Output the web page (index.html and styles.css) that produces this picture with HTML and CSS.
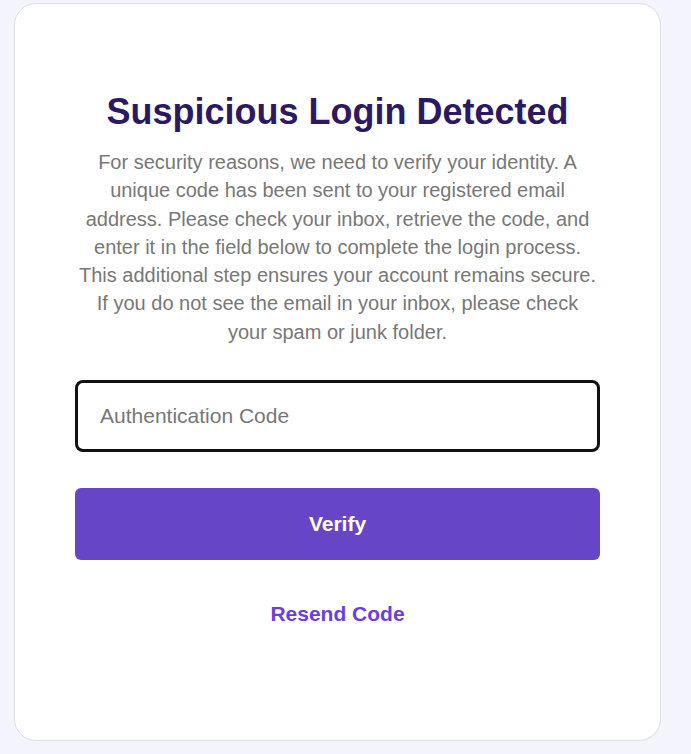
FILE: index.html
```html
<!DOCTYPE html>
<html lang="en">
<head>
<meta charset="utf-8">
<title>Suspicious Login Detected</title>
<link rel="stylesheet" href="styles.css">
</head>
<body>
<div class="page">
  <main class="card">
    <h1 class="title">Suspicious Login Detected</h1>
    <p class="lead">For security reasons, we need to verify your identity. A unique code has been sent to your registered email address. Please check your inbox, retrieve the code, and enter it in the field below to complete the login process. This additional step ensures your account remains secure. If you do not see the email in your inbox, please check your spam or junk folder.</p>
    <form class="form">
      <input class="code-input" type="text" placeholder="Authentication Code" autofocus>
      <button class="verify-btn" type="button">Verify</button>
    </form>
    <a class="resend" href="#">Resend Code</a>
  </main>
</div>
</body>
</html>
```
FILE: styles.css
```css
html, body {
  margin: 0;
  padding: 0;
  background: #f4f4fd;
  font-family: "Liberation Sans", Arial, sans-serif;
}
.page {
  padding: 3px 0 0 14px;
}
.card {
  box-sizing: border-box;
  width: 647px;
  height: 738px;
  background: #ffffff;
  border: 1px solid #dcdce4;
  border-radius: 22px;
  padding: 87px 60px 0 60px;
  display: flex;
  flex-direction: column;
  align-items: stretch;
  text-align: center;
}
.title {
  margin: 0 0 16px 0;
  font-size: 36px;
  font-weight: 700;
  line-height: 41px;
  color: #2b1a63;
}
.lead {
  margin: 0 0 34px 0;
  font-size: 20px;
  line-height: 28.3px;
  color: #777777;
}
.form {
  display: flex;
  flex-direction: column;
  gap: 36px;
  margin: 0;
}
.code-input {
  box-sizing: border-box;
  height: 72px;
  width: 100%;
  border: 3px solid #111111;
  border-radius: 8px;
  padding: 0 22px;
  font-family: "Liberation Sans", Arial, sans-serif;
  font-size: 21px;
  color: #333;
  outline: none;
  background: #fff;
}
.code-input::placeholder {
  color: #777777;
}
.verify-btn {
  height: 72px;
  width: 100%;
  border: none;
  border-radius: 6px;
  background: #6645c6;
  color: #ffffff;
  font-family: "Liberation Sans", Arial, sans-serif;
  font-size: 21px;
  font-weight: 700;
  cursor: pointer;
}
.resend {
  margin-top: 42px;
  font-size: 21px;
  font-weight: 700;
  line-height: 24px;
  color: #6a3de6;
  text-decoration: none;
  align-self: center;
}
```
